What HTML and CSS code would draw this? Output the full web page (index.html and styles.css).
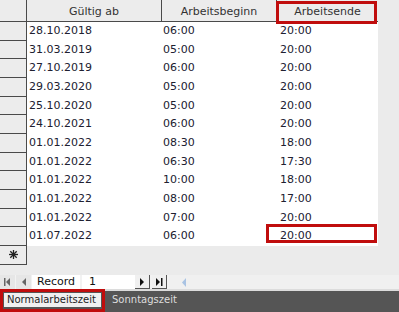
FILE: index.html
```html
<!DOCTYPE html>
<html>
<head>
<meta charset="utf-8">
<link rel="stylesheet" href="styles.css">
</head>
<body>
<div class="page">
  <div class="grid">
    <div class="row head">
      <div class="sel"></div>
      <div class="hc c1">Gültig ab</div>
      <div class="hc c2">Arbeitsbeginn</div>
      <div class="hc c3">Arbeitsende</div>
    </div>
    <div class="row"><div class="sel"></div><div class="dc c1">28.10.2018</div><div class="dc c2">06:00</div><div class="dc c3">20:00</div></div>
    <div class="row"><div class="sel"></div><div class="dc c1">31.03.2019</div><div class="dc c2">05:00</div><div class="dc c3">20:00</div></div>
    <div class="row"><div class="sel"></div><div class="dc c1">27.10.2019</div><div class="dc c2">06:00</div><div class="dc c3">20:00</div></div>
    <div class="row"><div class="sel"></div><div class="dc c1">29.03.2020</div><div class="dc c2">05:00</div><div class="dc c3">20:00</div></div>
    <div class="row"><div class="sel"></div><div class="dc c1">25.10.2020</div><div class="dc c2">05:00</div><div class="dc c3">20:00</div></div>
    <div class="row"><div class="sel"></div><div class="dc c1">24.10.2021</div><div class="dc c2">06:00</div><div class="dc c3">20:00</div></div>
    <div class="row"><div class="sel"></div><div class="dc c1">01.01.2022</div><div class="dc c2">08:30</div><div class="dc c3">18:00</div></div>
    <div class="row"><div class="sel"></div><div class="dc c1">01.01.2022</div><div class="dc c2">06:30</div><div class="dc c3">17:30</div></div>
    <div class="row"><div class="sel"></div><div class="dc c1">01.01.2022</div><div class="dc c2">10:00</div><div class="dc c3">18:00</div></div>
    <div class="row"><div class="sel"></div><div class="dc c1">01.01.2022</div><div class="dc c2">08:00</div><div class="dc c3">17:00</div></div>
    <div class="row"><div class="sel"></div><div class="dc c1">01.01.2022</div><div class="dc c2">07:00</div><div class="dc c3">20:00</div></div>
    <div class="row"><div class="sel"></div><div class="dc c1">01.07.2022</div><div class="dc c2">06:00</div><div class="dc c3">20:00</div></div>
    <div class="row newrow">
      <div class="sel star">
        <svg width="9" height="9" viewBox="0 0 9 9"><g stroke="#222" stroke-width="1.3"><line x1="4.5" y1="0" x2="4.5" y2="9"/><line x1="0" y1="4.5" x2="9" y2="4.5"/><line x1="1.3" y1="1.3" x2="7.7" y2="7.7"/><line x1="7.7" y1="1.3" x2="1.3" y2="7.7"/></g></svg>
      </div>
    </div>
  </div>

  <div class="nav">
    <div class="nb flat"><svg width="9" height="8" viewBox="0 0 9 8"><rect x="1" y="0" width="1.5" height="8" fill="#666"/><path d="M7 0 L3 4 L7 8 Z" fill="#666"/></svg></div>
    <div class="nb flat"><svg width="6" height="8" viewBox="0 0 6 8"><path d="M5 0 L1 4 L5 8 Z" fill="#666"/></svg></div>
    <div class="lbl">Record</div>
    <div class="num">1</div>
    <div class="nb raised"><svg width="6" height="8" viewBox="0 0 6 8"><path d="M1 0 L5 4 L1 8 Z" fill="#111"/></svg></div>
    <div class="nb raised"><svg width="9" height="8" viewBox="0 0 9 8"><path d="M1 0 L5 4 L1 8 Z" fill="#111"/><rect x="6" y="0" width="1.5" height="8" fill="#111"/></svg></div>
    <div class="scroll"><svg width="6" height="9" viewBox="0 0 6 9"><path d="M5 0 L1 4.5 L5 9 Z" fill="#a9c3e3"/></svg></div>
  </div>

  <div class="tabs">
    <div class="tab active">Normalarbeitszeit</div>
    <div class="tab">Sonntagszeit</div>
  </div>

  <div class="mark m-head"></div>
  <div class="mark m-cell"></div>
  <div class="mark m-tab"></div>
</div>
</body>
</html>
```

FILE: styles.css
```css
* { box-sizing: border-box; }
html, body { margin: 0; padding: 0; }
body {
  background: #ebebeb;
  font-family: "DejaVu Sans", Verdana, sans-serif;
  color: #1e1e1e;
}
.page {
  position: relative;
  width: 399px;
  height: 312px;
  overflow: hidden;
  display: flex;
  flex-direction: column;
}
.grid {
  display: flex;
  flex-direction: column;
  height: 275px;
}
.row {
  display: flex;
  height: 18.67px;
}
.row.head {
  height: 22px;
}
.sel {
  width: 27px;
  flex: none;
  background: #ececec;
  border-right: 1px solid #4a4a4a;
  border-bottom: 1px solid #4a4a4a;
}
.hc {
  background: #ececec;
  border-right: 1px solid #4a4a4a;
  border-bottom: 1px solid #4a4a4a;
  font-size: 11px;
  color: #333;
  display: flex;
  align-items: center;
  justify-content: center;
  padding-top: 1px;
}
.c1 { width: 135px; }
.c2 { width: 115px; }
.c3 { width: 101px; }
.head .c3 { border-right: none; }
.dc {
  background: #fff;
  font-size: 11px;
  line-height: 18px;
  white-space: nowrap;
  color: #202030;
}
.dc.c1 { padding-left: 2px; }
.dc.c2 { padding-left: 1px; }
.dc.c3 { padding-left: 3px; }
.newrow { height: 19px; }
.star {
  display: flex;
  align-items: center;
  justify-content: center;
}
.nav {
  display: flex;
  align-items: stretch;
  height: 14px;
  background: #f2f2f2;
}
.nb {
  width: 15px;
  display: flex;
  align-items: center;
  justify-content: center;
  background: #e6e6e6;
}
.nb.flat { margin-right: 1px; }
.nb.raised {
  background: #f0f0f0;
  border-right: 1px solid #555;
  border-bottom: 1px solid #555;
  margin-right: 2px;
}
.lbl {
  width: 48px;
  background: #fff;
  font-size: 11px;
  line-height: 14px;
  padding-left: 5px;
  margin-right: 2px;
  color: #111;
}
.num {
  width: 53px;
  background: #fff;
  font-size: 11px;
  line-height: 14px;
  padding-left: 7px;
  color: #111;
}
.scroll {
  flex: 1;
  display: flex;
  align-items: center;
  padding-left: 12px;
  background: #f0f0f0;
}
.tabs {
  height: 23px;
  background: #555;
  border-top: 2px solid #dcdcdc;
  display: flex;
  align-items: flex-start;
  padding-top: 2px;
}
.tab {
  font-size: 10px;
  height: 14px;
  line-height: 14px;
  color: #dedede;
  padding: 0 3px;
}
.tab.active {
  background: #f0f0f0;
  color: #222;
  margin-left: 4px;
  width: 97px;
  margin-right: 8px;
}
.mark {
  position: absolute;
  border: 3px solid #c00d0d;
}
.m-head { left: 276px; top: 1px; width: 101px; height: 23px; }
.m-cell { left: 266px; top: 224px; width: 111px; height: 19px; }
.m-tab { left: 0; top: 289px; width: 105px; height: 23px; }
```
